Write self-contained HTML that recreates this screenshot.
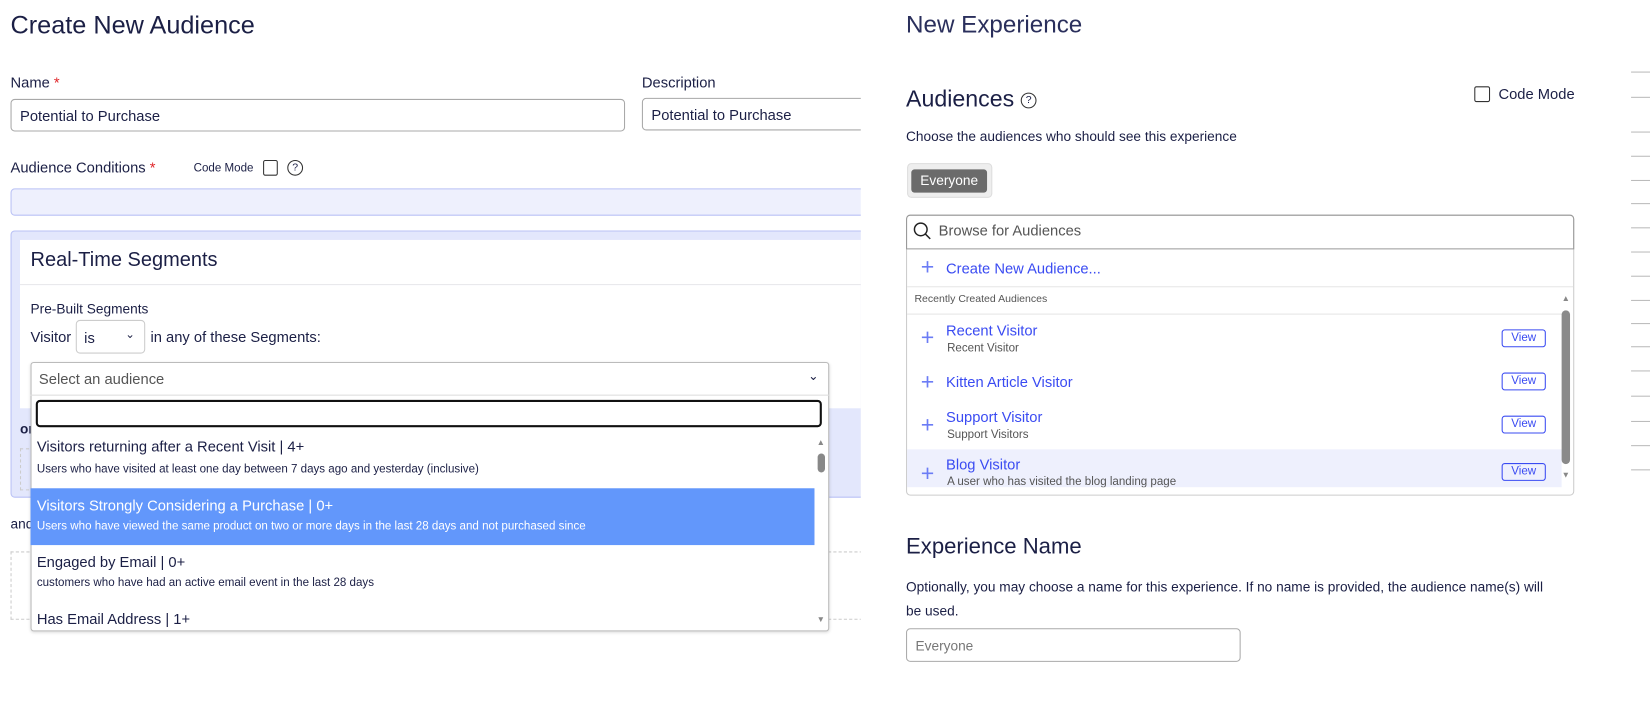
<!DOCTYPE html>
<html><head><meta charset="utf-8"><style>
*{box-sizing:border-box;margin:0;padding:0}
html,body{width:1650px;height:701px;overflow:hidden;background:#fff}
body{font-family:"Liberation Sans",Arial,sans-serif;color:#1b1f45;position:relative}
#w{position:absolute;left:0;top:0;width:1568px;height:667px;transform:scale(1.0523);transform-origin:0 0}
.a{position:absolute}
.inp{position:absolute;border:1px solid #a8a8a8;border-radius:4px;background:#fff;font-size:14px;padding-left:8px;display:flex;align-items:center}
.star{color:#e0262a}
.blue{color:#3a4bf2}
.view{position:absolute;left:1427px;width:42px;height:17px;border:1px solid #3a4bf2;border-radius:3px;font-size:11px;color:#3a4bf2;text-align:center;line-height:15px}
.plus{position:absolute;left:875px;font-size:22px;color:#6b7cf5;font-weight:300}
.rl{position:absolute;left:1550px;width:18px;height:1px;background:#bbb}
</style></head><body><div id="w">
<div style="position:absolute;left:0;top:0;width:818px;height:667px;overflow:hidden">
<div class="a" style="left:10px;top:11px;font-size:24px">Create New Audience</div>
<div class="a" style="left:10px;top:70px;font-size:14px">Name <span class="star">*</span></div>
<div class="inp" style="left:10px;top:94px;width:584px;height:31px">Potential to Purchase</div>
<div class="a" style="left:610px;top:70px;font-size:14px">Description</div>
<div class="inp" style="left:610px;top:93px;width:240px;height:31px">Potential to Purchase</div>
<div class="a" style="left:10px;top:151px;font-size:14px">Audience Conditions <span class="star">*</span></div>
<div class="a" style="left:184px;top:154px;font-size:11px">Code Mode</div>
<div class="a" style="left:250px;top:152px;width:14px;height:15px;border:1px solid #333;border-radius:2px"></div>
<div class="a" style="left:273px;top:152px;width:15px;height:15px;border:1.3px solid #333;border-radius:50%;font-size:10px;text-align:center;line-height:13px">?</div>
<div class="a" style="left:10px;top:179px;width:830px;height:26px;background:#eef0fd;border:1px solid #b9c1f5;border-radius:4px"></div>
<div class="a" style="left:10px;top:219px;width:830px;height:254px;background:#e3e7fc;border:1px solid #b9c1f5;border-radius:4px"></div>
<div class="a" style="left:19px;top:228px;width:820px;height:43px;background:#fff;border-bottom:1px solid #e6e6ea"></div>
<div class="a" style="left:29px;top:237px;font-size:19px">Real-Time Segments</div>
<div class="a" style="left:19px;top:271px;width:820px;height:117px;background:#fff"></div>
<div class="a" style="left:29px;top:286px;font-size:13px">Pre-Built Segments</div>
<div class="a" style="left:29px;top:312px;font-size:14px">Visitor</div>
<div class="a" style="left:72px;top:304px;width:66px;height:32px;border:1px solid #ccc;border-radius:4px;font-size:14px;padding:8px 0 0 7px">is<span style="position:absolute;left:46px;top:6px;font-size:11px">&#8964;</span></div>
<div class="a" style="left:143px;top:312px;font-size:14px">in any of these Segments:</div>
<div class="a" style="left:19px;top:400px;font-size:13px;font-weight:bold">or</div>
<div class="a" style="left:19px;top:426px;width:20px;height:40px;border:1px dashed #ccc"></div>
<div class="a" style="left:10px;top:490px;font-size:13px">and</div>
<div class="a" style="left:10px;top:524px;width:830px;height:65px;border:1px dashed #ccc"></div>
<div class="a" style="left:29px;top:344px;width:759px;height:256px;background:#fff;border:1px solid #bbb;border-radius:3px;box-shadow:0 1px 3px rgba(0,0,0,.15)"></div>
<div class="a" style="left:29px;top:344px;width:759px;height:32px;border-bottom:1px solid #ddd"></div>
<div class="a" style="left:37px;top:352px;font-size:14px;color:#555">Select an audience</div>
<div class="a" style="left:768px;top:350px;font-size:12px">&#8964;</div>
<div class="a" style="left:34px;top:380px;width:747px;height:26px;border:2px solid #111;border-radius:4px"></div>
<div class="a" style="left:35px;top:416px;font-size:14px">Visitors returning after a Recent Visit | 4+</div>
<div class="a" style="left:35px;top:440px;font-size:11px">Users who have visited at least one day between 7 days ago and yesterday (inclusive)</div>
<div class="a" style="left:29px;top:464px;width:745px;height:54px;background:#6297fb"></div>
<div class="a" style="left:35px;top:472px;font-size:14px;color:#fff">Visitors Strongly Considering a Purchase | 0+</div>
<div class="a" style="left:35px;top:494px;font-size:11px;color:#fff">Users who have viewed the same product on two or more days in the last 28 days and not purchased since</div>
<div class="a" style="left:35px;top:526px;font-size:14px">Engaged by Email | 0+</div>
<div class="a" style="left:35px;top:548px;font-size:11px">customers who have had an active email event in the last 28 days</div>
<div class="a" style="left:35px;top:580px;font-size:14px">Has Email Address | 1+</div>
<div class="a" style="left:776px;top:416px;font-size:8px;color:#888">&#9650;</div>
<div class="a" style="left:777px;top:431px;width:7px;height:18px;background:#888;border-radius:4px"></div>
<div class="a" style="left:776px;top:584px;font-size:8px;color:#888">&#9660;</div>
</div>

<div class="a" style="left:861px;top:10px;font-size:23px;color:#2a2f5c">New Experience</div>
<div class="a" style="left:861px;top:81px;font-size:22px">Audiences</div>
<div class="a" style="left:970px;top:88px;width:15px;height:15px;border:1.3px solid #333;border-radius:50%;font-size:10px;text-align:center;line-height:13px">?</div>
<div class="a" style="left:1401px;top:82px;width:15px;height:15px;border:1px solid #333;border-radius:2px"></div>
<div class="a" style="left:1424px;top:81px;font-size:14px">Code Mode</div>
<div class="a" style="left:861px;top:122px;font-size:13px">Choose the audiences who should see this experience</div>
<div class="a" style="left:862px;top:155px;width:81px;height:33px;background:#eee;border:1px solid #ddd;border-radius:4px"></div>
<div class="a" style="left:866px;top:161px;width:72px;height:22px;background:#6b6b6b;border-radius:3px;color:#fff;font-size:13px;text-align:center;line-height:22px">Everyone</div>
<div class="a" style="left:861px;top:204px;width:635px;height:267px;border:1px solid #ccc;border-radius:4px"></div>
<div class="a" style="left:861px;top:204px;width:635px;height:33px;border:1px solid #999;border-radius:4px 4px 0 0"></div>
<svg class="a" style="left:867px;top:210px" width="20" height="20" viewBox="0 0 20 20"><circle cx="8" cy="8" r="6" fill="none" stroke="#222" stroke-width="1.4"/><line x1="12.3" y1="12.3" x2="17" y2="17" stroke="#222" stroke-width="1.4"/></svg>
<div class="a" style="left:892px;top:211px;font-size:14px;color:#555">Browse for Audiences</div>
<div class="plus" style="top:241px">+</div>
<div class="a blue" style="left:899px;top:247px;font-size:14px">Create New Audience...</div>
<div class="a" style="left:862px;top:272px;width:633px;height:1px;background:#e6e6e6"></div>
<div class="a" style="left:869px;top:279px;font-size:10px;color:#555">Recently Created Audiences</div>
<div class="a" style="left:862px;top:298px;width:622px;height:1px;background:#e6e6e6"></div>
<div class="a" style="left:862px;top:427px;width:622px;height:36px;background:#eef0fd"></div>
<div class="plus" style="top:308px">+</div><div class="a blue" style="left:899px;top:306px;font-size:14px">Recent Visitor</div><div class="a" style="left:900px;top:325px;font-size:11px;color:#555">Recent Visitor</div><div class="view" style="top:313px">View</div>
<div class="plus" style="top:350px">+</div><div class="a blue" style="left:899px;top:355px;font-size:14px">Kitten Article Visitor</div><div class="view" style="top:354px">View</div>
<div class="plus" style="top:391px">+</div><div class="a blue" style="left:899px;top:388px;font-size:14px">Support Visitor</div><div class="a" style="left:900px;top:407px;font-size:11px;color:#555">Support Visitors</div><div class="view" style="top:395px">View</div>
<div class="plus" style="top:437px">+</div><div class="a blue" style="left:899px;top:433px;font-size:14px">Blog Visitor</div><div class="a" style="left:900px;top:452px;font-size:11px;color:#555;height:11px;overflow:hidden">A user who has visited the blog landing page</div><div class="view" style="top:440px">View</div>
<div class="a" style="left:1484px;top:279px;font-size:8px;color:#888">&#9650;</div>
<div class="a" style="left:1484px;top:295px;width:8px;height:146px;background:#8a8a8a;border-radius:4px"></div>
<div class="a" style="left:1484px;top:447px;font-size:8px;color:#888">&#9660;</div>
<div class="a" style="left:861px;top:508px;font-size:21px">Experience Name</div>
<div class="a" style="left:861px;top:546px;font-size:13px;line-height:23px;width:620px">Optionally, you may choose a name for this experience. If no name is provided, the audience name(s) will be used.</div>
<div class="inp" style="left:861px;top:597px;width:318px;height:32px;color:#777;font-size:13px;border-color:#aaa">Everyone</div>
<div class="rl" style="top:68px"></div><div class="rl" style="top:92px"></div><div class="rl" style="top:125px"></div><div class="rl" style="top:148px"></div><div class="rl" style="top:171px"></div><div class="rl" style="top:193px"></div><div class="rl" style="top:216px"></div><div class="rl" style="top:239px"></div><div class="rl" style="top:262px"></div><div class="rl" style="top:285px"></div><div class="rl" style="top:307px"></div><div class="rl" style="top:329px"></div><div class="rl" style="top:352px"></div><div class="rl" style="top:376px"></div><div class="rl" style="top:400px"></div><div class="rl" style="top:423px"></div><div class="rl" style="top:446px"></div>
</div></body></html>
